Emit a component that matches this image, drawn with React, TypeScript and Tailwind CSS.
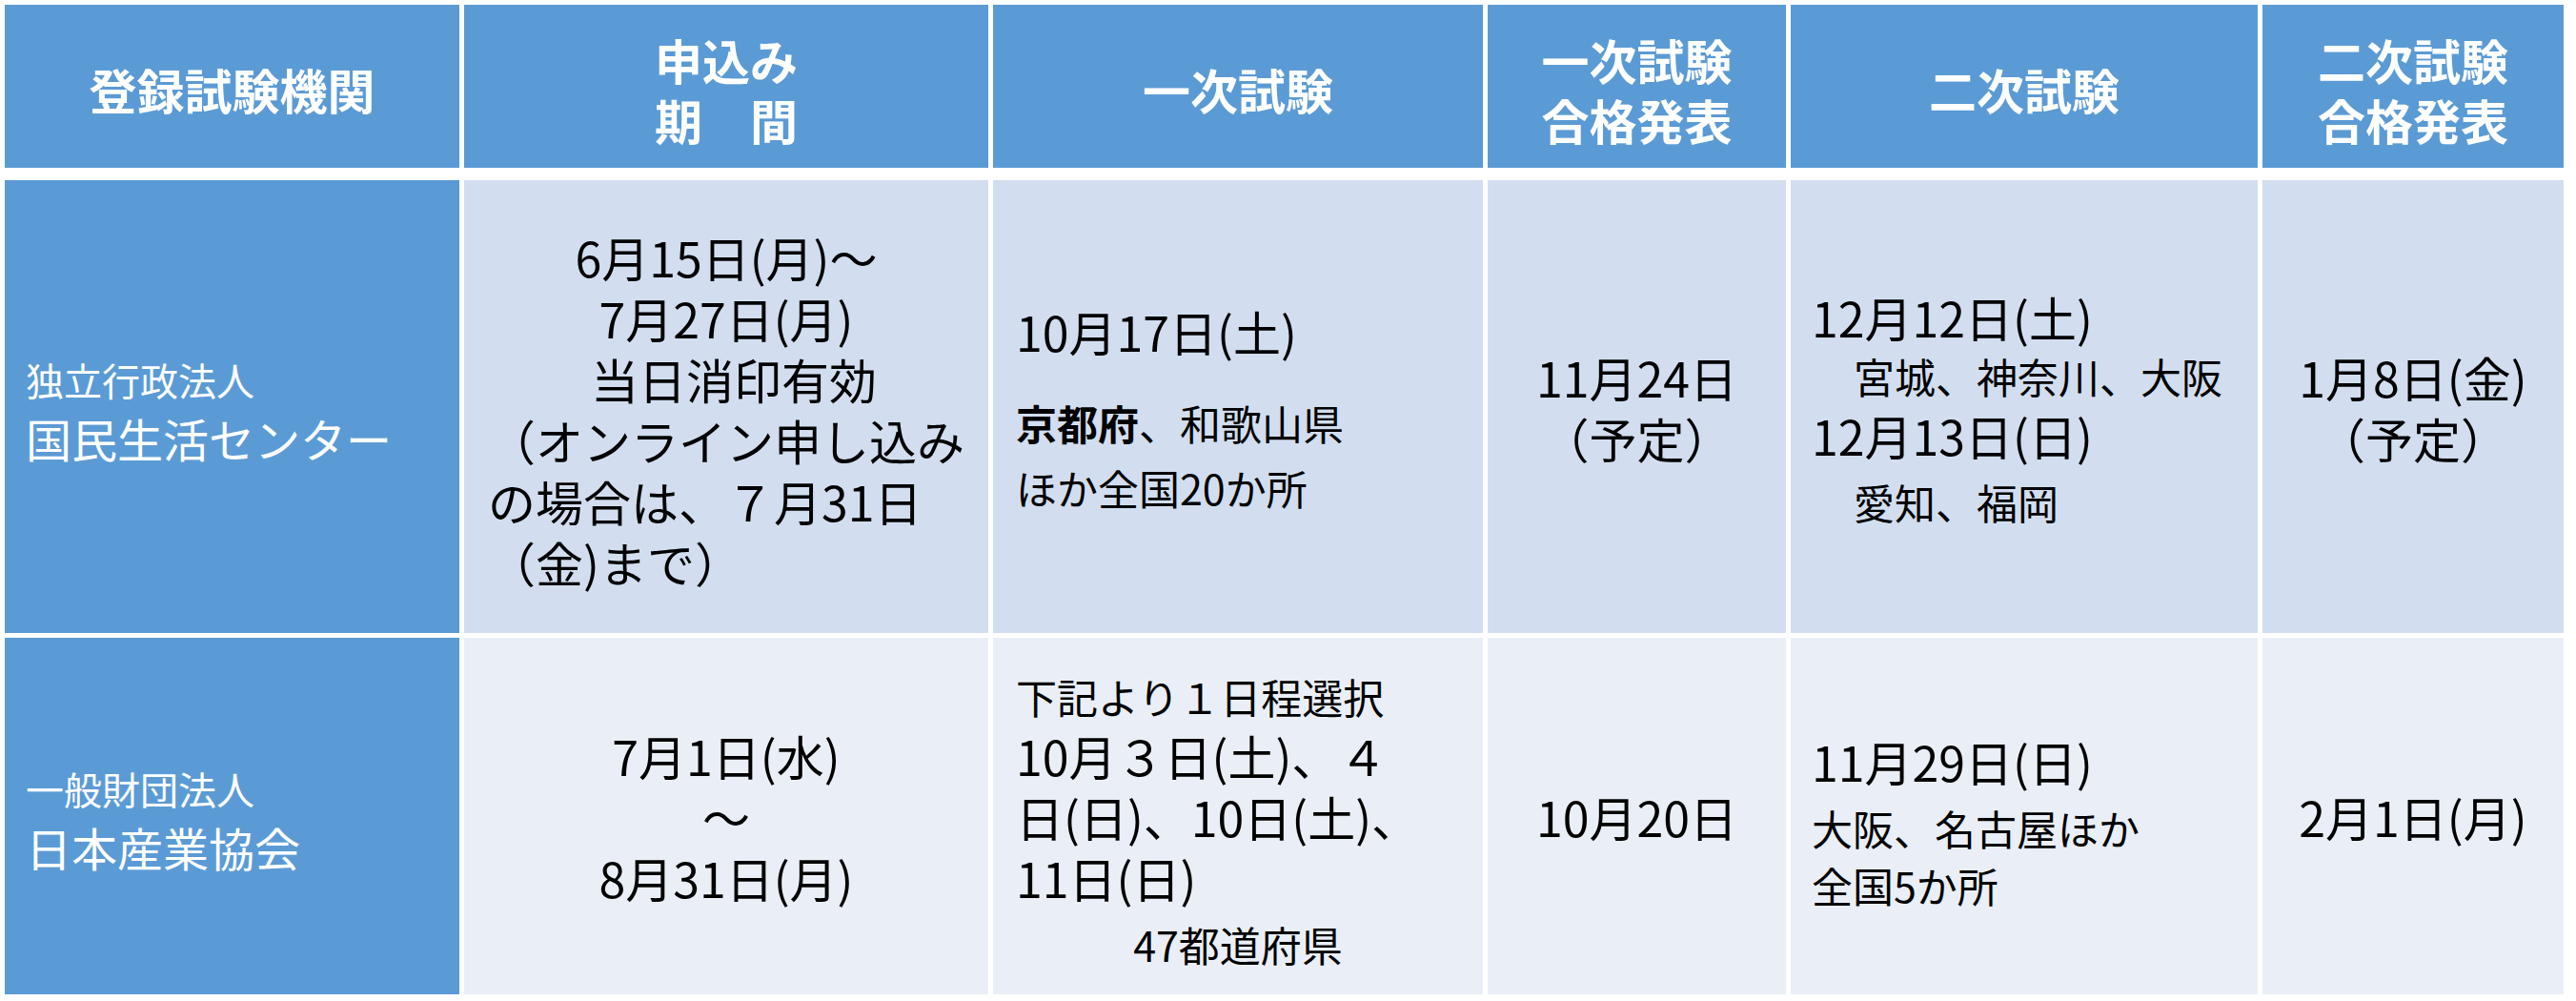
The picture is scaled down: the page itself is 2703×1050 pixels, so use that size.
const font = "font-['Noto_Sans_CJK_JP','Noto_Sans',sans-serif]";

function HeaderCell({ lines }: { lines: string[] }) {
  return (
    <div className="flex h-[171px] flex-col items-center justify-center bg-[#5b9bd5] pt-[6px] text-[50px] font-bold leading-[63px] text-white">
      {lines.map((l) => (
        <div key={l}>{l}</div>
      ))}
    </div>
  );
}

function OrgCell({ kind, name }: { kind: string; name: string }) {
  return (
    <div className="flex flex-col justify-center bg-[#5b9bd5] pl-[22px] pt-[6px] text-white">
      <div className="text-[40px] leading-[58px]">{kind}</div>
      <div className="text-[48px] leading-[64px]">{name}</div>
    </div>
  );
}

function Center({ lines, bg }: { lines: string[]; bg: string }) {
  return (
    <div className={`flex flex-col items-center justify-center ${bg} text-[50px] leading-[64px] text-black`}>
      {lines.map((l) => (
        <div key={l}>{l}</div>
      ))}
    </div>
  );
}

export default function App() {
  return (
    <div className={`min-h-screen w-[2703px] bg-white pl-[5px] pt-[5px] ${font}`}>
      {/* header */}
      <div className="grid grid-cols-[477px_550px_514px_313px_490px_316px] gap-x-[5px]">
        <HeaderCell lines={['登録試験機関']} />
        <HeaderCell lines={['申込み', '期　間']} />
        <HeaderCell lines={['一次試験']} />
        <HeaderCell lines={['一次試験', '合格発表']} />
        <HeaderCell lines={['二次試験']} />
        <HeaderCell lines={['二次試験', '合格発表']} />
      </div>

      {/* body */}
      <div className="mt-[13px] grid grid-cols-[477px_550px_514px_313px_490px_316px] grid-rows-[475px_374px] gap-x-[5px] gap-y-[5px]">
        {/* row 1 */}
        <OrgCell kind="独立行政法人" name="国民生活センター" />
        <div className="flex flex-col justify-center bg-[#d2deef] pt-[4px] text-[50px] leading-[64px] text-black">
          <div className="text-center">6月15日(月)～</div>
          <div className="text-center">7月27日(月)</div>
          <div className="pl-[16px] text-center">当日消印有効</div>
          <div className="pl-[25px]">
            （オンライン申し込み
            <br />
            の場合は、７月31日
            <br />
            （金)まで）
          </div>
        </div>
        <div className="flex flex-col justify-center bg-[#d2deef] pl-[24px] pt-[6px] text-black">
          <div className="mb-[30px] text-[50px] leading-[64px]">10月17日(土)</div>
          <div className="text-[43px] leading-[68px]">
            <span className="font-bold">京都府</span>、和歌山県
          </div>
          <div className="text-[43px] leading-[68px]">ほか全国20か所</div>
        </div>
        <Center bg="bg-[#d2deef]" lines={['11月24日', '（予定）']} />
        <div className="flex flex-col justify-center bg-[#d2deef] pl-[22px] pt-[10px] text-black">
          <div className="text-[50px] leading-[64px]">12月12日(土)</div>
          <div className="pl-[44px] text-[43px] leading-[60px]">宮城、神奈川、大阪</div>
          <div className="text-[50px] leading-[64px]">12月13日(日)</div>
          <div className="pl-[44px] text-[43px] leading-[76px]">愛知、福岡</div>
        </div>
        <Center bg="bg-[#d2deef]" lines={['1月8日(金)', '（予定）']} />

        {/* row 2 */}
        <OrgCell kind="一般財団法人" name="日本産業協会" />
        <Center bg="bg-[#eaeff7]" lines={['7月1日(水)', '～', '8月31日(月)']} />
        <div className="flex flex-col justify-center bg-[#eaeff7] pl-[24px] pt-[16px] text-black">
          <div className="text-[43px] leading-[60px]">下記より１日程選択</div>
          <div className="text-[50px] leading-[64px]">10月３日(土)、４</div>
          <div className="text-[50px] leading-[64px]">日(日)、10日(土)、</div>
          <div className="text-[50px] leading-[64px]">11日(日)</div>
          <div className="pr-[24px] text-center text-[43px] leading-[76px]">47都道府県</div>
        </div>
        <Center bg="bg-[#eaeff7]" lines={['10月20日']} />
        <div className="flex flex-col justify-center bg-[#eaeff7] pl-[22px] pt-[4px] text-black">
          <div className="text-[50px] leading-[64px]">11月29日(日)</div>
          <div className="text-[43px] leading-[76px]">大阪、名古屋ほか</div>
          <div className="text-[43px] leading-[44px]">全国5か所</div>
        </div>
        <Center bg="bg-[#eaeff7]" lines={['2月1日(月)']} />
      </div>
    </div>
  );
}
